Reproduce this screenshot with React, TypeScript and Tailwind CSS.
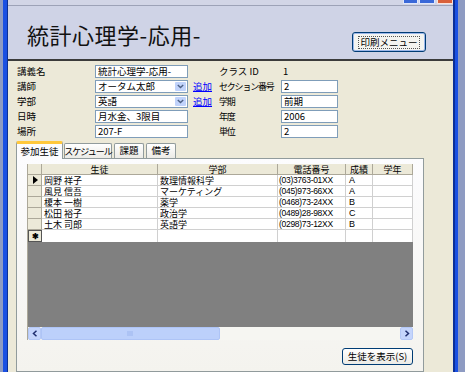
import React from "react";

const rows = [
  ["岡野 祥子", "数理情報科学", "(03)3763-01XX", "A"],
  ["風見 信吾", "マーケティング", "(045)973-66XX", "A"],
  ["榎本 一樹", "薬学", "(0468)73-24XX", "B"],
  ["松田 裕子", "政治学", "(0489)28-98XX", "C"],
  ["土木 司郎", "英語学", "(0298)73-12XX", "B"],
];

function Input({ value, w, combo }: { value: string; w: string; combo?: boolean }) {
  return (
    <div className={`${w} h-[13px] bg-white border border-[#7f9db9] flex items-center relative`}>
      <span className="pl-[2px] text-[9.5px] leading-none whitespace-nowrap">{value}</span>
      {combo && (
        <div className="absolute right-[1px] top-[1px] bottom-[1px] w-[11px] bg-[#c1d3fb] rounded-[1px] flex items-center justify-center">
          <svg width="7" height="5" viewBox="0 0 7 5">
            <path d="M0.8 1 L3.5 3.6 L6.2 1" stroke="#4d6185" strokeWidth="1.4" fill="none" />
          </svg>
        </div>
      )}
    </div>
  );
}

function Link() {
  return <span className="ml-[5px] text-[9.5px] leading-none text-[#0000ff] underline whitespace-nowrap">追加</span>;
}

const cell = "border-r border-b border-[#d0d0d0] bg-white flex items-center whitespace-nowrap";

export default function App() {
  return (
    <div className="w-[465px] h-[372px] overflow-hidden flex bg-[#ece9d8] font-['Noto_Sans_CJK_JP',sans-serif] text-black leading-none">
      <div className="w-[3px] shrink-0 bg-[#8e9bc2]" />
      <div className="w-[4px] shrink-0 bg-[#1a50e2]" />
      <div className="w-px shrink-0 bg-[#0b2f96]" />
      <div className="w-[445px] shrink-0 flex flex-col">
        {/* title bar remnant */}
        <div className="h-[6px] shrink-0 bg-[#d2d5e6] border-b border-[#9da2b7] relative">
          <div className="absolute top-0 right-[35px] w-[15px] h-[4px] bg-[#3a68d8] border-x border-b border-[#dfe6fb] rounded-b-[1px]" />
          <div className="absolute top-0 right-[18px] w-[16px] h-[4px] bg-[#3a68d8] border-x border-b border-[#dfe6fb] rounded-b-[1px]" />
          <div className="absolute top-0 right-0 w-[16px] h-[4px] bg-[#d9603a] border-x border-b border-[#fbe2d9] rounded-b-[1px]" />
        </div>
        {/* header */}
        <div className="h-[55px] shrink-0 bg-[#cfd3e6] border-b-2 border-[#3b3b3b] flex items-start justify-between pl-[19px] pr-[27px]">
          <div className="mt-[17px] text-[22px] leading-none tracking-[0.5px] text-[#111] whitespace-nowrap">統計心理学-応用-</div>
          <div className="mt-[26px] w-[74px] h-[20px] rounded-[3px] border border-[#003c74] bg-[#f4f4f0] shadow-[inset_0_0_0_1px_#9cb7ea] flex items-center justify-center">
            <span className="border border-dotted border-[#555] px-[1px] text-[9.5px] leading-[11px] whitespace-nowrap">印刷メニュー</span>
          </div>
        </div>
        {/* body */}
        <div className="flex-1 flex flex-col bg-[#ece9d8]">
          <div className="flex pt-[3px]">
            <div className="w-[211px] pl-[9px] flex flex-col">
              {[
                ["講義名", "統計心理学-応用-", false],
                ["講師", "オータム太郎", true],
                ["学部", "英語", true],
                ["日時", "月水金、3限目", false],
                ["場所", "207-F", false],
              ].map(([l, v, c]) => (
                <div key={l as string} className="h-[15px] flex items-center">
                  <span className="w-[78px] text-[9.5px] whitespace-nowrap">{l as string}</span>
                  <Input value={v as string} w="w-[93px]" combo={c as boolean} />
                  {c && <Link />}
                </div>
              ))}
            </div>
            <div className="flex flex-col">
              <div className="h-[15px] flex items-center">
                <span className="w-[62px] text-[9.5px] whitespace-nowrap">クラス ID</span>
                <span className="pl-[2px] text-[9.5px]">1</span>
              </div>
              {[
                ["セクション番号", "2"],
                ["学期", "前期"],
                ["年度", "2006"],
                ["単位", "2"],
              ].map(([l, v]) => (
                <div key={l} className="h-[15px] flex items-center">
                  <span className="w-[62px] shrink-0 text-[9px] whitespace-nowrap tracking-[-1.2px]">{l}</span>
                  <Input value={v} w="w-[57px]" />
                </div>
              ))}
            </div>
          </div>
          {/* tabs */}
          <div className="ml-[8px] mt-[2px] h-[18px] flex items-end relative z-10">
            <div className="w-[47px] h-[18px] bg-[#fcfcfe] border-x border-[#919b9c] border-t-[3px] border-t-[#ffc83c] rounded-t-[2px] flex items-center justify-center text-[9.5px] whitespace-nowrap">参加生徒</div>
            <div className="ml-px w-[48px] h-[15px] mb-px bg-gradient-to-b from-white to-[#ecebe6] border border-b-0 border-[#919b9c] rounded-t-[2px] flex items-center justify-center text-[9px] tracking-[-1px] whitespace-nowrap">スケジュール</div>
            <div className="ml-[2px] w-[30px] h-[15px] mb-px bg-gradient-to-b from-white to-[#ecebe6] border border-b-0 border-[#919b9c] rounded-t-[2px] flex items-center justify-center text-[9.5px] whitespace-nowrap">課題</div>
            <div className="ml-[2px] w-[30px] h-[15px] mb-px bg-gradient-to-b from-white to-[#ecebe6] border border-b-0 border-[#919b9c] rounded-t-[2px] flex items-center justify-center text-[9.5px] whitespace-nowrap">備考</div>
          </div>
          {/* panel */}
          <div className="ml-[8px] w-[408px] flex-1 -mt-px bg-gradient-to-b from-[#fcfcfe] to-[#f4f3ee] border border-[#919b9c] flex flex-col pt-[5px] pl-[10px]">
            <div className="w-[386px] h-[176px] border-l border-[#aca899] flex flex-col bg-[#808080]">
              {/* header */}
              <div className="h-[11px] flex bg-[#ece9d8] text-[9px]">
                <div className="w-[14px] border-r border-b border-[#aca899]" />
                {[
                  ["生徒", "w-[116px]"],
                  ["学部", "w-[120px]"],
                  ["電話番号", "w-[68px]"],
                  ["成績", "w-[27px]"],
                  ["学年", "w-[40px]"],
                ].map(([t, w]) => (
                  <div key={t} className={`${w} border-r border-b border-[#aca899] flex items-center justify-center whitespace-nowrap`}>{t}</div>
                ))}
              </div>
              {rows.map((r, i) => (
                <div key={i} className="h-[11px] flex text-[9px]">
                  <div className="w-[14px] bg-[#ece9d8] border-r border-b border-[#aca899] flex items-center justify-center">
                    {i === 0 && (
                      <svg width="6" height="8" viewBox="0 0 6 8"><path d="M1 0 L6 4 L1 8 Z" fill="#000" /></svg>
                    )}
                  </div>
                  <div className={`w-[116px] pl-[2px] ${cell}`}>{r[0]}</div>
                  <div className={`w-[120px] pl-[2px] ${cell}`}>{r[1]}</div>
                  <div className={`w-[68px] pl-[1px] ${cell} font-['Liberation_Sans',sans-serif] text-[8.5px] tracking-[-0.3px]`}>{r[2]}</div>
                  <div className={`w-[27px] pl-[3px] ${cell} font-['Liberation_Sans',sans-serif] text-[9px]`}>{r[3]}</div>
                  <div className={`w-[40px] ${cell}`} />
                </div>
              ))}
              <div className="h-[12px] flex">
                <div className="w-[14px] bg-[#ece9d8] border border-[#555] flex items-center justify-center text-[8px] font-bold">✱</div>
                <div className="w-[116px] bg-white border-r border-[#d0d0d0]" />
                <div className="w-[120px] bg-white border-r border-[#d0d0d0]" />
                <div className="w-[68px] bg-white border-r border-[#d0d0d0]" />
                <div className="w-[27px] bg-white border-r border-[#d0d0d0]" />
                <div className="w-[40px] bg-white border-r border-[#d0d0d0]" />
              </div>
              <div className="flex-1" />
              {/* scrollbar */}
              <div className="h-[13px] flex bg-[#f6f6f2]">
                <div className="w-[13px] bg-[#c5d5fc] rounded-[2px] border border-[#b4c8f6] flex items-center justify-center">
                  <svg width="6" height="7" viewBox="0 0 6 7"><path d="M4.5 0.8 L1.5 3.5 L4.5 6.2" stroke="#1f2e6e" strokeWidth="1.5" fill="none" /></svg>
                </div>
                <div className="w-[179px] bg-[#bcd0fb] rounded-[2px] border border-[#aec4f6] flex items-center justify-center">
                  <svg width="7" height="5" viewBox="0 0 7 5"><path d="M1 0V5M3 0V5M5 0V5" stroke="#9db6ee" strokeWidth="1" /></svg>
                </div>
                <div className="flex-1" />
                <div className="w-[13px] bg-[#c5d5fc] rounded-[2px] border border-[#b4c8f6] flex items-center justify-center">
                  <svg width="6" height="7" viewBox="0 0 6 7"><path d="M1.5 0.8 L4.5 3.5 L1.5 6.2" stroke="#1f2e6e" strokeWidth="1.5" fill="none" /></svg>
                </div>
              </div>
            </div>
            <div className="mt-[8px] ml-[315px] w-[71px] h-[17px] rounded-[3px] border border-[#003c74] bg-gradient-to-b from-white to-[#ecebe6] flex items-center justify-center text-[9.5px] whitespace-nowrap">
              生徒を表示(S)
            </div>
          </div>
        </div>
      </div>
      <div className="w-[2px] shrink-0 bg-[#0b2f96]" />
      <div className="w-[3px] shrink-0 bg-[#1a50e2]" />
      <div className="w-[7px] shrink-0 bg-[#8e9bc2]" />
    </div>
  );
}
